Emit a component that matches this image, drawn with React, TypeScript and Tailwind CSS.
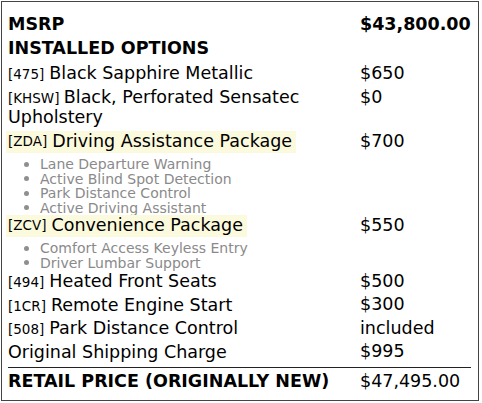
import React from "react"

type Item = {
  code?: string
  name: string
  price: string
  h: string
  hl?: boolean
  two?: boolean
  features?: string[]
}

const items: Item[] = [
  { code: "[475]", name: "Black Sapphire Metallic", price: "$650", h: "h-[25px]" },
  { code: "[KHSW]", name: "Black, Perforated Sensatec Upholstery", price: "$0", two: true, h: "h-[45px]" },
  {
    code: "[ZDA]",
    name: "Driving Assistance Package",
    price: "$700",
    hl: true,
    h: "h-[22px]",
    features: [
      "Lane Departure Warning",
      "Active Blind Spot Detection",
      "Park Distance Control",
      "Active Driving Assistant",
    ],
  },
  {
    code: "[ZCV]",
    name: "Convenience Package",
    price: "$550",
    hl: true,
    h: "h-[22px]",
    features: ["Comfort Access Keyless Entry", "Driver Lumbar Support"],
  },
  { code: "[494]", name: "Heated Front Seats", price: "$500", h: "h-[23px]" },
  { code: "[1CR]", name: "Remote Engine Start", price: "$300", h: "h-[24px]" },
  { code: "[508]", name: "Park Distance Control", price: "included", h: "h-[23px]" },
  { name: "Original Shipping Charge", price: "$995", h: "h-[24px]" },
]

function Row({ it }: { it: Item }) {
  if (it.two) {
    return (
      <div className={`flex ${it.h} pt-[1px] leading-[20px]`}>
        <div className="w-[352px] pr-[10px]">
          <span className="text-[13.5px] leading-none">{it.code} </span>
          {it.name}
        </div>
        <div>{it.price}</div>
      </div>
    )
  }
  return (
    <div className={`flex items-center ${it.h}`}>
      <div className="w-[352px] h-full flex items-center">
        <div
          className={
            it.hl
              ? "h-full flex items-center bg-[#fcfadd] -ml-[2px] pl-[2px] pr-[4px] whitespace-nowrap"
              : "whitespace-nowrap"
          }
        >
          {it.code && <span className="text-[13.5px] leading-none mr-[5px]">{it.code}</span>}
          <span className="leading-none">{it.name}</span>
        </div>
      </div>
      <div className="leading-none">{it.price}</div>
    </div>
  )
}

export default function App() {
  return (
    <div className="w-[482px] h-[403px] bg-white pt-[1px] pl-[1px] font-['DejaVu_Sans',sans-serif] text-[17.5px] text-black">
      <div className="w-[478px] h-[400px] border border-[#444] pl-[6px] pr-[7px] pt-[11px]">
        <div className="flex font-bold h-[24px] items-center leading-none">
          <div className="w-[352px]">MSRP</div>
          <div>$43,800.00</div>
        </div>
        <div className="font-bold h-[24px] flex items-center leading-none">INSTALLED OPTIONS</div>

        {items.map((it) => (
          <div key={it.name}>
            <Row it={it} />
            {it.features && (
              <ul className="pl-[16px] text-[14px] leading-none text-[#8a8a8a] mt-[4px]">
                {it.features.map((f) => (
                  <li key={f} className="flex items-center h-[14.5px]">
                    <span className="w-[5px] h-[5px] rounded-full bg-[#8f8f8f] mr-[11px]" />
                    {f}
                  </li>
                ))}
              </ul>
            )}
          </div>
        ))}

        <div className="border-t border-[#222] mt-[3px] flex font-bold h-[28px] items-center leading-none">
          <div className="w-[352px]">RETAIL PRICE (ORIGINALLY NEW)</div>
          <div className="font-normal">$47,495.00</div>
        </div>
      </div>
    </div>
  )
}
